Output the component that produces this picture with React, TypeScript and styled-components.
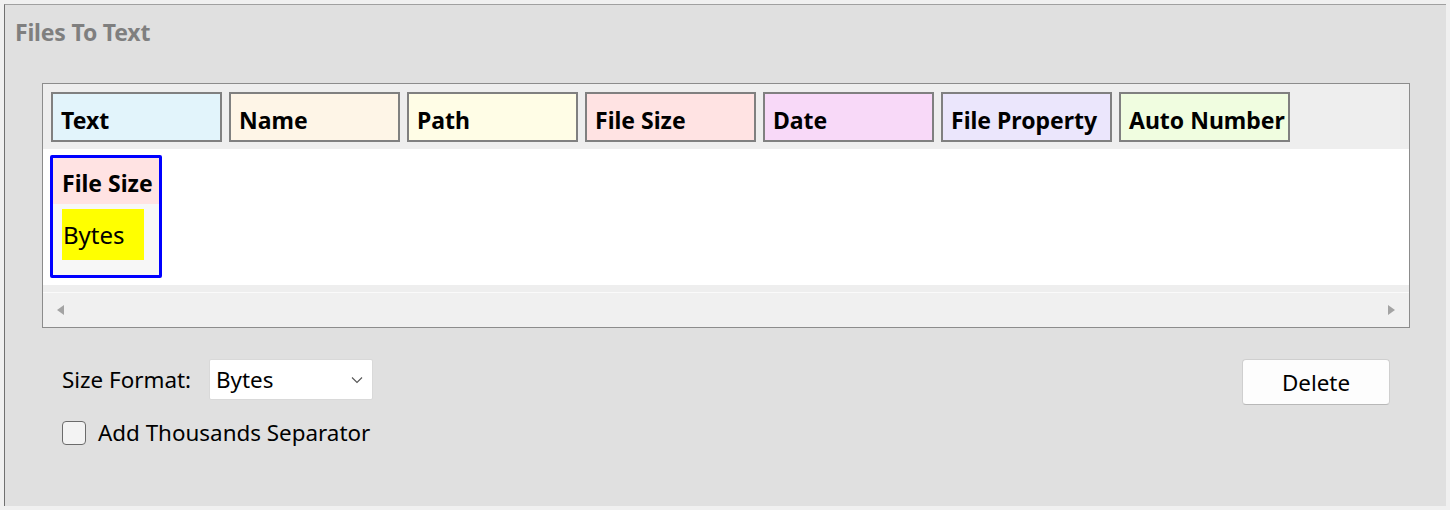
import React from 'react'
import styled, { createGlobalStyle } from 'styled-components'

const GlobalStyle = createGlobalStyle`
  html, body {
    margin: 0;
    padding: 0;
    background: #f0f0f0;
  }
  body {
    font-family: "Noto Sans", "Open Sans", sans-serif;
    color: #000;
  }
`

const tokens = [
  { label: 'Text', bg: '#e2f4fb' },
  { label: 'Name', bg: '#fef5e7' },
  { label: 'Path', bg: '#fffde6' },
  { label: 'File Size', bg: '#ffe3e3' },
  { label: 'Date', bg: '#f8d9f8' },
  { label: 'File Property', bg: '#ebe6fc' },
  { label: 'Auto Number', bg: '#f0fde0' },
]

const Page = styled.div`
  padding: 4px 4px 4px 4px;
  height: 502px;
`

const Panel = styled.section`
  height: 502px;
  box-sizing: border-box;
  background: #e0e0e0;
  border-top: 1px solid #a0a0a0;
  border-left: 1px solid #707070;
  padding: 12px 36px 0 10px;
  display: flex;
  flex-direction: column;
`

const Title = styled.h1`
  margin: 0;
  font-size: 23px;
  line-height: 30px;
  font-weight: 700;
  color: #7f7f7f;
  letter-spacing: -0.2px;
`

const Board = styled.div`
  margin: 36px 0 0 27px;
  border: 1px solid #8c8c8c;
  background: #eeeeee;
  display: flex;
  flex-direction: column;
`

const TokenRow = styled.div`
  display: flex;
  gap: 7px;
  padding: 8px 8px 7px;
`

const Token = styled.div<{ $bg: string }>`
  width: 171px;
  height: 50px;
  box-sizing: border-box;
  border: 2px solid #808080;
  background: ${p => p.$bg};
  display: flex;
  align-items: flex-end;
  padding: 0 0 5px 8px;
  font-size: 23px;
  font-weight: 700;
  line-height: 30px;
  white-space: nowrap;
  overflow: hidden;
`

const Canvas = styled.div`
  height: 136px;
  background: #fff;
  padding: 6px 7px;
  box-sizing: border-box;
  margin-bottom: 7px;
`

const Card = styled.div`
  width: 112px;
  height: 123px;
  box-sizing: border-box;
  border: 3px solid #0000ff;
  border-radius: 2px;
  background: #f7f7f7;
  display: flex;
  flex-direction: column;
`

const CardHead = styled.div<{ $bg: string }>`
  height: 46px;
  background: ${p => p.$bg};
  padding: 0 0 6px 9px;
  display: flex;
  align-items: flex-end;
  box-sizing: border-box;
  font-size: 23px;
  font-weight: 700;
  line-height: 30px;
  white-space: nowrap;
  overflow: hidden;
`

const ValueChip = styled.div`
  margin: 5px 0 0 9px;
  width: 82px;
  height: 51px;
  background: #ffff00;
  display: flex;
  align-items: center;
  padding-left: 1px;
  box-sizing: border-box;
  font-size: 24px;
`

const ScrollGap = styled.div`
  height: 1px;
  background: #fafafa;
`

const HScroll = styled.div`
  height: 34px;
  background: #f0f0f0;
  display: flex;
  align-items: center;
  justify-content: space-between;
  padding: 0 14px;
`

const Arrow = styled.span<{ $dir: 'left' | 'right' }>`
  width: 0;
  height: 0;
  border-top: 5px solid transparent;
  border-bottom: 5px solid transparent;
  ${p => (p.$dir === 'left' ? 'border-right: 7px solid #a3a3a3;' : 'border-left: 7px solid #a3a3a3;')}
`

const Controls = styled.div`
  margin: 31px 20px 0 47px;
  display: flex;
  justify-content: space-between;
  align-items: flex-start;
`

const Options = styled.div`
  display: flex;
  flex-direction: column;
  gap: 17px;
`

const Row = styled.label`
  display: flex;
  align-items: center;
  font-size: 22.4px;
`

const FieldLabel = styled.span`
  width: 147px;
`

const Select = styled.div`
  width: 164px;
  height: 41px;
  box-sizing: border-box;
  background: #fff;
  border: 1px solid #d9d9d9;
  border-radius: 2px;
  display: flex;
  align-items: center;
  justify-content: space-between;
  padding: 0 9px 0 6px;
  font-size: 22.4px;
`

const Check = styled.span`
  width: 24px;
  height: 24px;
  box-sizing: border-box;
  border: 1px solid #6b6b6b;
  border-radius: 4px;
  background: #f3f3f3;
  margin-right: 12px;
`

const Button = styled.button`
  width: 148px;
  height: 46px;
  background: #fdfdfd;
  border: 1px solid #cfcfcf;
  border-bottom-color: #b8b8b8;
  border-radius: 4px;
  font-family: inherit;
  font-size: 22.4px;
  color: #000;
  padding: 0;
`

const Chevron = () => (
  <svg width="12" height="8" viewBox="0 0 12 8">
    <path d="M1 1.5 L6 6.5 L11 1.5" fill="none" stroke="#555" strokeWidth="1.1" />
  </svg>
)

export default function App() {
  return (
    <>
      <GlobalStyle />
      <Page>
        <Panel>
          <Title>Files To Text</Title>
          <Board>
            <TokenRow>
              {tokens.map(t => (
                <Token key={t.label} $bg={t.bg}>{t.label}</Token>
              ))}
            </TokenRow>
            <Canvas>
              <Card>
                <CardHead $bg="#ffe3e3">File Size</CardHead>
                <ValueChip>Bytes</ValueChip>
              </Card>
            </Canvas>
            <ScrollGap />
            <HScroll>
              <Arrow $dir="left" />
              <Arrow $dir="right" />
            </HScroll>
          </Board>
          <Controls>
            <Options>
              <Row>
                <FieldLabel>Size Format:</FieldLabel>
                <Select>
                  <span>Bytes</span>
                  <Chevron />
                </Select>
              </Row>
              <Row>
                <Check />
                Add Thousands Separator
              </Row>
            </Options>
            <Button>Delete</Button>
          </Controls>
        </Panel>
      </Page>
    </>
  )
}
